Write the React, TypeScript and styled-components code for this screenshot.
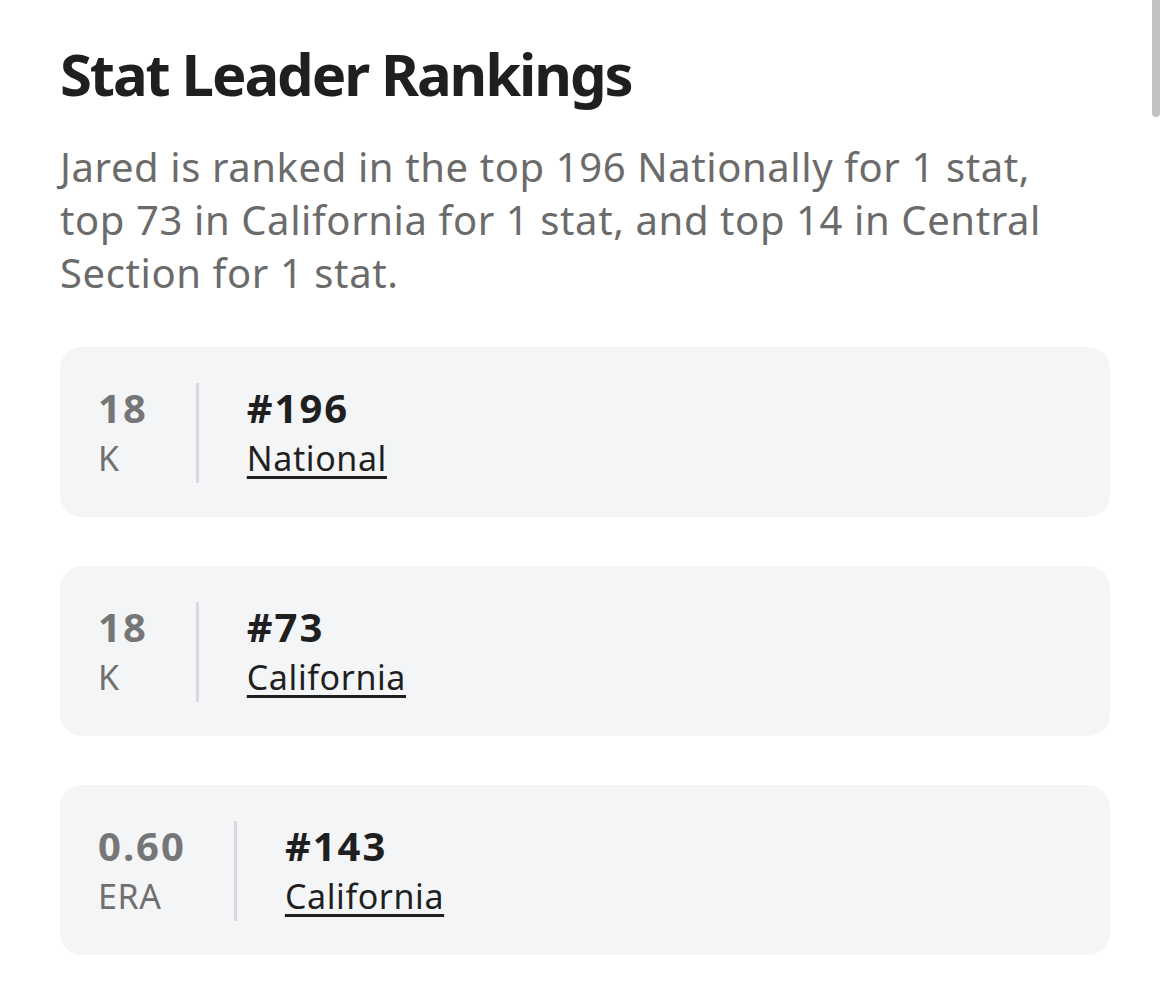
import styled, { createGlobalStyle } from 'styled-components'

const Global = createGlobalStyle`
  html, body {
    margin: 0;
    padding: 0;
    background: #fff;
  }
  body {
    font-family: 'Noto Sans', 'Open Sans', sans-serif;
    overflow: hidden;
  }
`

const Page = styled.main`
  padding: 38px 51px 40px 60px;
`

const Title = styled.h1`
  margin: 0;
  font-size: 58px;
  line-height: 72px;
  font-weight: 700;
  color: #1f1f1f;
  letter-spacing: -2.1px;
`

const Intro = styled.p`
  margin: 30px 0 0;
  font-size: 40px;
  line-height: 53px;
  color: #6b6b6b;
  letter-spacing: 0.6px;
  max-width: 995px;
`

const List = styled.div`
  margin-top: 48px;
  display: flex;
  flex-direction: column;
  gap: 49px;
`

const Card = styled.section`
  background: #f4f5f7;
  border-radius: 22px;
  height: 170px;
  box-sizing: border-box;
  padding: 36px 38px 34px;
  display: flex;
  align-items: stretch;
`

const StatCol = styled.div`
  display: flex;
  flex-direction: column;
  padding-right: 48px;
  border-right: 3px solid #d8d9dc;
`

const Rank = styled.div`
  display: flex;
  flex-direction: column;
  padding-left: 48px;
`

const Big = styled.span<{ $muted?: boolean }>`
  font-size: 40px;
  line-height: 50px;
  font-weight: 700;
  letter-spacing: 2px;
  color: ${(p) => (p.$muted ? '#767676' : '#1f1f1f')};
`

const Small = styled.span`
  font-size: 34px;
  line-height: 50px;
  color: #707070;
  letter-spacing: 0.6px;
`

const Place = styled.a`
  font-size: 34px;
  line-height: 50px;
  color: #1f1f1f;
  letter-spacing: 0.6px;
  text-decoration: underline;
  text-decoration-thickness: 3px;
  text-underline-offset: 5px;
`

const Scrollbar = styled.div`
  position: fixed;
  top: 0;
  right: 1px;
  width: 8px;
  height: 117px;
  background: #c2c2c2;
  border-radius: 0 0 4px 4px;
`

const rows = [
  { value: '18', stat: 'K', rank: '#196', place: 'National' },
  { value: '18', stat: 'K', rank: '#73', place: 'California' },
  { value: '0.60', stat: 'ERA', rank: '#143', place: 'California' },
]

export default function App() {
  return (
    <>
      <Global />
      <Page>
        <Title>Stat Leader Rankings</Title>
        <Intro>
          Jared is ranked in the top 196 Nationally for 1 stat, top 73 in California for 1 stat, and top 14 in
          Central Section for 1 stat.
        </Intro>
        <List>
          {rows.map((r, i) => (
            <Card key={i}>
              <StatCol>
                <Big $muted>{r.value}</Big>
                <Small>{r.stat}</Small>
              </StatCol>
              <Rank>
                <Big>{r.rank}</Big>
                <Place>{r.place}</Place>
              </Rank>
            </Card>
          ))}
        </List>
      </Page>
      <Scrollbar />
    </>
  )
}
